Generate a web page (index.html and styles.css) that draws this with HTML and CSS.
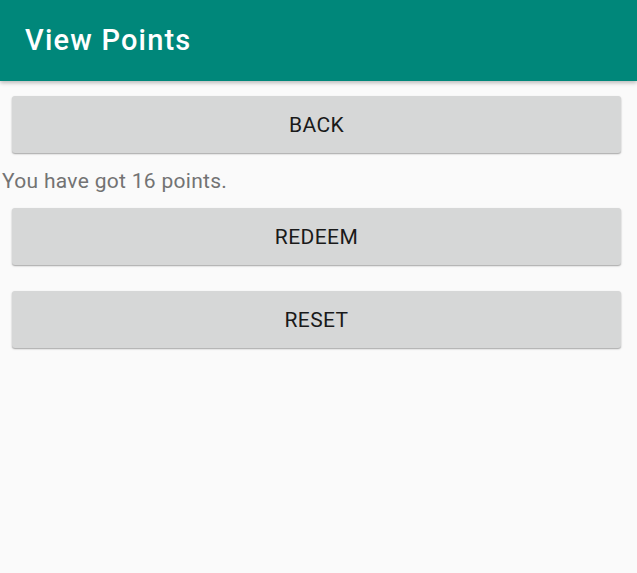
FILE: index.html
```html
<!DOCTYPE html>
<html>
<head>
<meta charset="utf-8">
<link rel="stylesheet" href="styles.css">
</head>
<body>
<header class="appbar"><h1 class="title">View Points</h1></header>
<main class="content">
  <button class="btn btn-back">BACK</button>
  <p class="points">You have got 16 points.</p>
  <button class="btn btn-redeem">REDEEM</button>
  <button class="btn btn-reset">RESET</button>
</main>
</body>
</html>
```
FILE: styles.css
```css
html, body {
  margin: 0;
  padding: 0;
  background: #fafafa;
  font-family: Roboto, "Noto Sans", sans-serif;
}
.appbar {
  height: 81px;
  background: #00877a;
  display: flex;
  align-items: center;
  padding-left: 25px;
  box-shadow: 0 2px 4px rgba(0,0,0,0.25);
  position: relative;
}
.title {
  margin: 0 0 2px 0;
  color: #ffffff;
  font-size: 29px;
  font-weight: 500;
  letter-spacing: 1.2px;
}
.content {
  display: flex;
  flex-direction: column;
  padding: 15px 16px 10px 2px;
}
.btn {
  margin-left: 10px;
  height: 57px;
  flex: none;
  border: none;
  border-radius: 3px;
  background: #d6d7d7;
  color: #1a1a1a;
  font-family: Roboto, "Noto Sans", sans-serif;
  font-size: 21px;
  letter-spacing: 0.4px;
  box-shadow: 0 1px 2px rgba(0,0,0,0.25), 0 1px 1px rgba(0,0,0,0.12);
  padding: 0;
}
.points {
  margin: 16px 0 15px 0;
  color: #737373;
  font-size: 21px;
  line-height: 24px;
  letter-spacing: 0.3px;
}
.btn-reset {
  margin-top: 26px;
}
```
